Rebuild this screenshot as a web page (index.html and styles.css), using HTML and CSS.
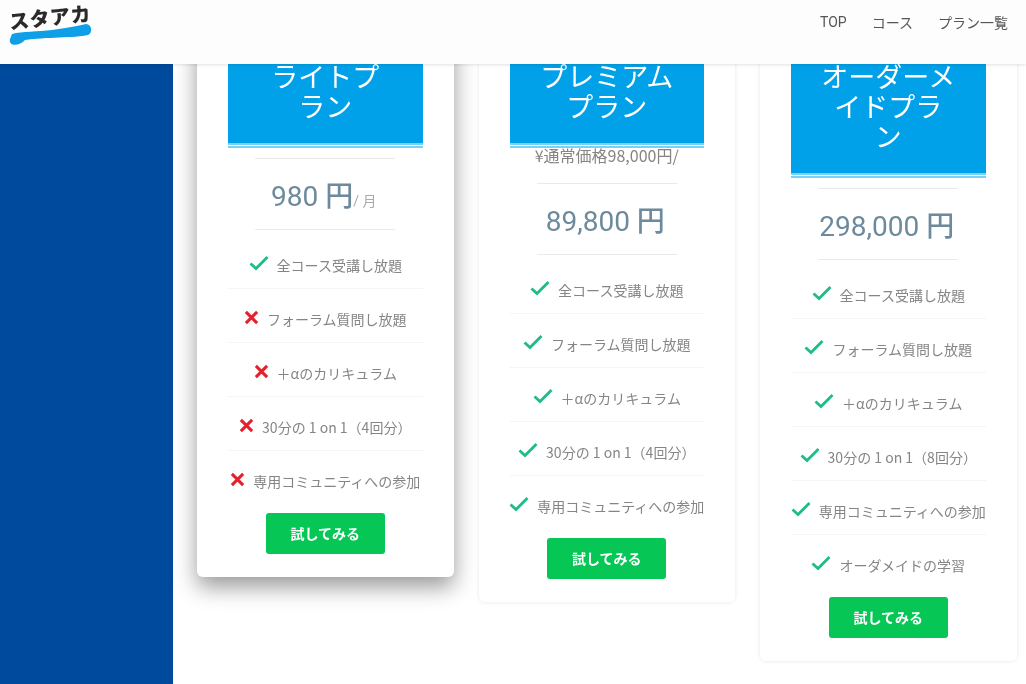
FILE: index.html
```html
<!DOCTYPE html>
<html lang="ja">
  <head>
    <meta charset="UTF-8" />
    <meta name="viewport" content="width=device-width, initial-scale=1.0" />
    <title>スタアカ - プラン一覧</title>
    <link rel="stylesheet" href="styles.css">
  </head>
  <body>
    <svg class="icon-defs" width="0" height="0" aria-hidden="true">
      <symbol id="icon-check" viewBox="0 0 20 16">
        <path d="M1.5 8.5 L7 13.5 L18.5 2" fill="none" stroke="currentColor" stroke-width="2.8" />
      </symbol>
      <symbol id="icon-cross" viewBox="0 0 16 16">
        <path d="M2 2 L14 14 M14 2 L2 14" fill="none" stroke="currentColor" stroke-width="3.2" />
      </symbol>
    </svg>

    <header class="site-header">
      <a class="logo" href="#">
        <svg class="logo-brush" viewBox="0 0 100 50" width="100" height="50" aria-hidden="true">
          <path d="M12 34 C22 31 38 32 52 30 S78 26 86 24 C92 24 93 33 88 35 C75 38 45 37 25 40 C20 46 8 47 10 39 Z" />
        </svg>
        <span class="logo-text">スタアカ</span>
      </a>
      <nav class="site-nav">
        <a href="#">TOP</a>
        <a href="#">コース</a>
        <a href="#">プラン一覧</a>
      </nav>
    </header>

    <div class="page">
      <aside class="sidebar"></aside>

      <main class="plans">
        <section class="plan-card plan-card-featured">
          <h2 class="plan-title">ライトプ<br>ラン</h2>
          <hr class="plan-rule" />
          <p class="plan-price">980 <b>円</b><small>/ 月</small></p>
          <hr class="plan-rule plan-rule-end" />
          <ul class="feature-list">
            <li><svg class="icon icon-yes"><use href="#icon-check" /></svg>全コース受講し放題</li>
            <li><svg class="icon icon-no"><use href="#icon-cross" /></svg>フォーラム質問し放題</li>
            <li><svg class="icon icon-no"><use href="#icon-cross" /></svg>＋αのカリキュラム</li>
            <li><svg class="icon icon-no"><use href="#icon-cross" /></svg>30分の 1 on 1（4回分）</li>
            <li><svg class="icon icon-no"><use href="#icon-cross" /></svg>専用コミュニティへの参加</li>
          </ul>
          <a class="try-btn" href="#">試してみる</a>
        </section>

        <section class="plan-card">
          <h2 class="plan-title">プレミアム<br>プラン</h2>
          <p class="plan-note">¥通常価格98,000円/</p>
          <hr class="plan-rule" />
          <p class="plan-price">89,800 <b>円</b></p>
          <hr class="plan-rule plan-rule-end" />
          <ul class="feature-list">
            <li><svg class="icon icon-yes"><use href="#icon-check" /></svg>全コース受講し放題</li>
            <li><svg class="icon icon-yes"><use href="#icon-check" /></svg>フォーラム質問し放題</li>
            <li><svg class="icon icon-yes"><use href="#icon-check" /></svg>＋αのカリキュラム</li>
            <li><svg class="icon icon-yes"><use href="#icon-check" /></svg>30分の 1 on 1（4回分）</li>
            <li><svg class="icon icon-yes"><use href="#icon-check" /></svg>専用コミュニティへの参加</li>
          </ul>
          <a class="try-btn" href="#">試してみる</a>
        </section>

        <section class="plan-card">
          <h2 class="plan-title">オーダーメ<br>イドプラ<br>ン</h2>
          <hr class="plan-rule" />
          <p class="plan-price">298,000 <b>円</b></p>
          <hr class="plan-rule plan-rule-end" />
          <ul class="feature-list">
            <li><svg class="icon icon-yes"><use href="#icon-check" /></svg>全コース受講し放題</li>
            <li><svg class="icon icon-yes"><use href="#icon-check" /></svg>フォーラム質問し放題</li>
            <li><svg class="icon icon-yes"><use href="#icon-check" /></svg>＋αのカリキュラム</li>
            <li><svg class="icon icon-yes"><use href="#icon-check" /></svg>30分の 1 on 1（8回分）</li>
            <li><svg class="icon icon-yes"><use href="#icon-check" /></svg>専用コミュニティへの参加</li>
            <li><svg class="icon icon-yes"><use href="#icon-check" /></svg>オーダメイドの学習</li>
          </ul>
          <a class="try-btn" href="#">試してみる</a>
        </section>
      </main>
    </div>
  </body>
</html>
```

FILE: styles.css
```css
* {
  margin: 0;
  padding: 0;
  box-sizing: border-box;
}

html,
body {
  height: 684px;
  overflow: hidden;
}

body {
  font-family: 'Noto Sans CJK JP', Roboto, sans-serif;
  color: #858585;
  background: #fff;
  filter: blur(0.7px);
}

a {
  color: inherit;
  text-decoration: none;
}

.icon-defs {
  position: absolute;
}

/* header */
.site-header {
  position: relative;
  z-index: 2;
  height: 64px;
  display: flex;
  justify-content: space-between;
  background: #fdfdfd;
  box-shadow: 0 1px 3px rgba(0, 0, 0, 0.12);
}

.logo {
  position: relative;
  width: 100px;
  height: 50px;
}

.logo-brush {
  position: absolute;
  left: 0;
  top: 0;
  fill: #0f9fe6;
}

.logo-text {
  position: absolute;
  left: 9px;
  top: 3px;
  font-size: 20px;
  line-height: 28px;
  font-weight: 900;
  letter-spacing: 0.5px;
  color: #2a2a2a;
  transform: rotate(-6deg);
  white-space: nowrap;
}

.site-nav {
  display: flex;
  gap: 25px;
  padding: 12px 18px 0 0;
  font-size: 14px;
  line-height: 20px;
  color: #555;
}

.site-nav a:first-child {
  font-family: Roboto, sans-serif;
}

/* page */
.page {
  display: flex;
  height: 620px;
}

.sidebar {
  flex: 0 0 173px;
  background: #004a9e;
}

.plans {
  flex: 1;
  display: flex;
  align-items: flex-start;
  gap: 25px;
  padding-left: 24px;
  margin-top: -56px;
  height: 676px;
}

/* cards */
.plan-card {
  flex: 0 0 256.5px;
  min-width: 0;
  padding: 31px 31px 23px;
  background: #fff;
  border-radius: 6px;
  box-shadow: 0 0 4px rgba(0, 0, 0, 0.1);
  text-align: center;
}

.plan-card-featured {
  box-shadow: 0 10px 22px rgba(0, 0, 0, 0.4);
}

.plan-title {
  padding: 22px 0;
  background: #00a1e9;
  background-clip: padding-box;
  border-bottom: 5px double #7bd0f6;
  color: #fff;
  font-size: 27px;
  line-height: 30px;
  font-weight: 400;
}

.plan-note {
  margin-top: -3px;
  padding-bottom: 8px;
  font-size: 16px;
  line-height: 20px;
  white-space: nowrap;
}

.plan-rule {
  width: 140px;
  height: 1px;
  margin: 10px auto 0;
  border: 0;
  background: #eaeaea;
}

.plan-price {
  height: 70px;
  margin-left: -3px;
  font-family: Roboto, 'Noto Sans CJK JP', sans-serif;
  font-size: 28px;
  line-height: 76px;
  color: #6c8a9c;
  white-space: nowrap;
}

.plan-price b {
  font-weight: 500;
}

.plan-price small {
  font-size: 14px;
  color: #aaa;
}

.plan-rule-end {
  margin-top: 0;
}

.feature-list {
  list-style: none;
  margin-top: 5px;
}

.feature-list li {
  display: flex;
  align-items: center;
  justify-content: center;
  gap: 8px;
  padding: 20px 0 13.1px;
  border-bottom: 1px solid #f5f5f5;
  font-size: 14px;
  line-height: 20px;
  white-space: nowrap;
}

.feature-list li:last-child {
  border-bottom-color: transparent;
}

.icon {
  margin-bottom: 4px;
}

.icon-yes {
  flex: none;
  width: 20px;
  height: 16px;
  color: #1fbd85;
}

.icon-no {
  flex: none;
  width: 15px;
  height: 15px;
  color: #e3202b;
}

.try-btn {
  display: block;
  width: 119px;
  height: 41px;
  margin: 7.5px auto 0;
  background: #06c755;
  border-radius: 3px;
  color: #fff;
  font-size: 14px;
  font-weight: 700;
  line-height: 40px;
}
```
